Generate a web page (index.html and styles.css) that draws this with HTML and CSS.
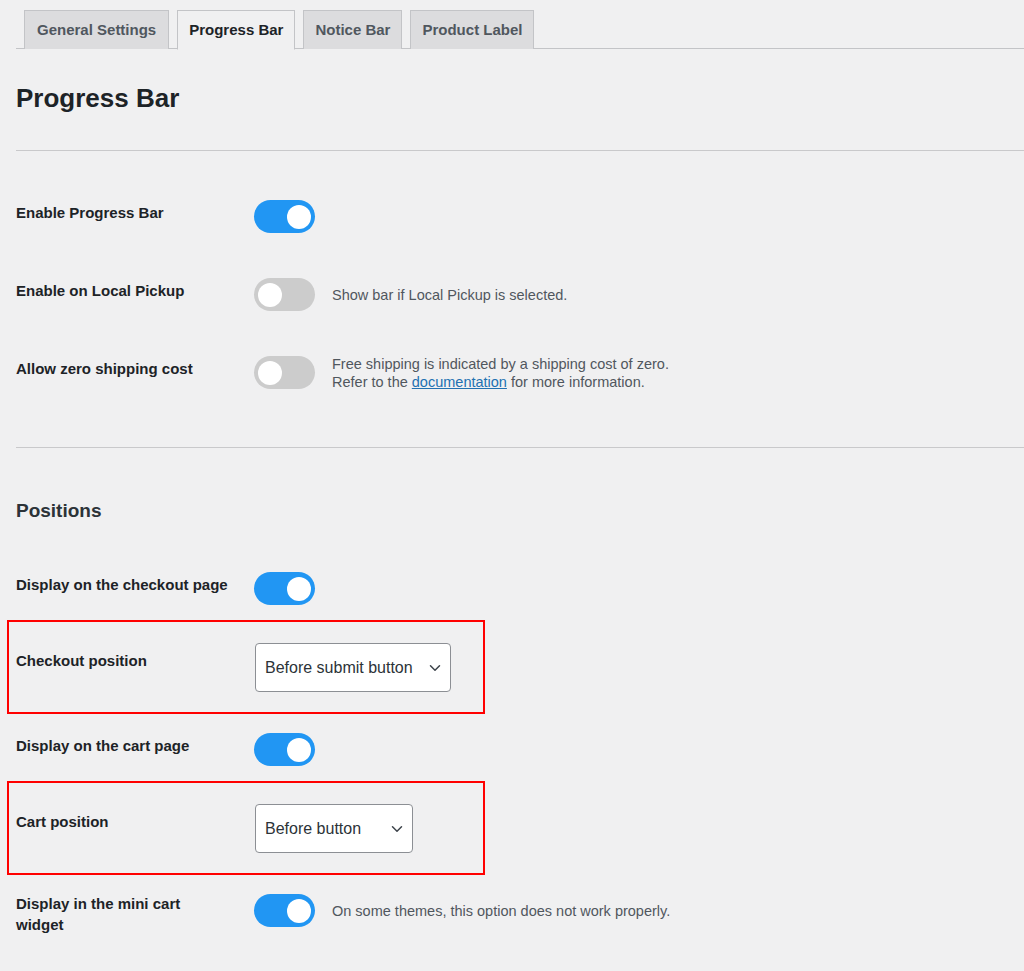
FILE: index.html
```html
<!DOCTYPE html>
<html lang="en">
<head>
<meta charset="utf-8">
<title>Progress Bar</title>
<link rel="stylesheet" href="styles.css">
</head>
<body>
<div class="page">
  <nav class="tabs">
    <a class="tab">General Settings</a>
    <a class="tab tab--active">Progress Bar</a>
    <a class="tab">Notice Bar</a>
    <a class="tab">Product Label</a>
  </nav>

  <h1 class="title">Progress Bar</h1>
  <hr class="sep sep--first">

  <div class="row">
    <div class="label">Enable Progress Bar</div>
    <div class="control"><span class="switch switch--on"></span></div>
  </div>
  <div class="row">
    <div class="label">Enable on Local Pickup</div>
    <div class="control"><span class="switch"></span><p class="desc">Show bar if Local Pickup is selected.</p></div>
  </div>
  <div class="row">
    <div class="label">Allow zero shipping cost</div>
    <div class="control"><span class="switch"></span><p class="desc desc--two">Free shipping is indicated by a shipping cost of zero.<br>Refer to the <a class="link">documentation</a> for more information.</p></div>
  </div>

  <hr class="sep sep--second">
  <h2 class="subtitle">Positions</h2>

  <div class="row">
    <div class="label">Display on the checkout page</div>
    <div class="control"><span class="switch switch--on"></span></div>
  </div>
  <div class="row row--highlight">
    <div class="label label--select">Checkout position</div>
    <div class="control">
      <div class="select select--wide"><span>Before submit button</span>
        <svg class="chevron" width="12" height="8" viewBox="0 0 12 8"><path d="M1.5 1.8 6 6.2 10.5 1.8" fill="none" stroke="#3c434a" stroke-width="1.5" stroke-linecap="round" stroke-linejoin="round"/></svg>
      </div>
    </div>
  </div>
  <div class="row">
    <div class="label">Display on the cart page</div>
    <div class="control"><span class="switch switch--on"></span></div>
  </div>
  <div class="row row--highlight">
    <div class="label label--select">Cart position</div>
    <div class="control">
      <div class="select select--narrow"><span>Before button</span>
        <svg class="chevron" width="12" height="8" viewBox="0 0 12 8"><path d="M1.5 1.8 6 6.2 10.5 1.8" fill="none" stroke="#3c434a" stroke-width="1.5" stroke-linecap="round" stroke-linejoin="round"/></svg>
      </div>
    </div>
  </div>
  <div class="row row--last">
    <div class="label label--wrap">Display in the mini cart widget</div>
    <div class="control"><span class="switch switch--on"></span><p class="desc">On some themes, this option does not work properly.</p></div>
  </div>
</div>
</body>
</html>
```

FILE: styles.css
```css
* { box-sizing: border-box; }

html, body {
  margin: 0;
  background: #f0f0f1;
  font-family: "Liberation Sans", Arial, sans-serif;
  color: #1d2327;
}

.page {
  padding-left: 16px;
  padding-top: 10px;
}

.tabs {
  display: flex;
  border-bottom: 1px solid #c3c4c7;
  height: 39px;
}

.tab {
  display: block;
  margin-left: 8px;
  padding: 0 11px;
  height: 39px;
  line-height: 37px;
  font-size: 15px;
  font-weight: 700;
  color: #50575e;
  background: #dcdcde;
  border: 1px solid #c3c4c7;
  border-bottom: none;
  white-space: nowrap;
}

.tab:first-child { padding: 0 12px; }

.tab--active {
  background: #f0f0f1;
  color: #1d2327;
  height: 40px;
  border-bottom: 1px solid #f0f0f1;
}

.title {
  margin: 33px 0 0;
  font-size: 26px;
  line-height: 32px;
  font-weight: 700;
  color: #1d2327;
}

.sep {
  border: 0;
  border-top: 1px solid #c9c9cb;
  margin: 0;
}

.sep--first { margin-top: 36px; margin-bottom: 27px; }
.sep--second { margin-top: 35px; }

.subtitle {
  margin: 51px 0 27px;
  font-size: 19px;
  line-height: 24px;
  font-weight: 700;
  color: #2c3338;
}

.row {
  display: flex;
  align-items: flex-start;
  padding: 22px 0 23px;
}

.row--highlight {
  width: 478px;
  margin: -8px 0 -3px -9px;
  padding: 21px 0 20px 7px;
  border: 2px solid #ff0000;
}

.row--last { padding-top: 22px; }

.label {
  width: 214px;
  margin-right: 24px;
  margin-top: 2px;
  font-size: 15px;
  line-height: 22px;
  font-weight: 700;
  color: #1d2327;
}

.label--select { margin-top: 7px; }
.label--wrap { margin-top: -1px; line-height: 21px; }

.control {
  display: flex;
  align-items: center;
  gap: 17px;
}

.switch {
  position: relative;
  display: block;
  flex: none;
  width: 61px;
  height: 33px;
  border-radius: 17px;
  background: #cccccc;
}

.switch::after {
  content: "";
  position: absolute;
  left: 4px;
  top: 4.5px;
  width: 24px;
  height: 24px;
  border-radius: 50%;
  background: #ffffff;
}

.switch--on { background: #2196f3; }
.switch--on::after { left: auto; right: 4px; }

.desc {
  margin: 0;
  font-size: 14.5px;
  line-height: 18px;
  color: #50575e;
}

.desc--two { margin: -2px 0; }

.link {
  color: #2271b1;
  text-decoration: underline;
}

.select {
  display: flex;
  align-items: center;
  justify-content: space-between;
  margin-left: 1px;
  height: 49px;
  padding: 0 9px 0 9px;
  background: #ffffff;
  border: 1px solid #8c8f94;
  border-radius: 4px;
  font-size: 16px;
  color: #2c3338;
}

.select--wide { width: 196px; }
.select--narrow { width: 158px; }

.chevron { display: block; flex: none; }
```
